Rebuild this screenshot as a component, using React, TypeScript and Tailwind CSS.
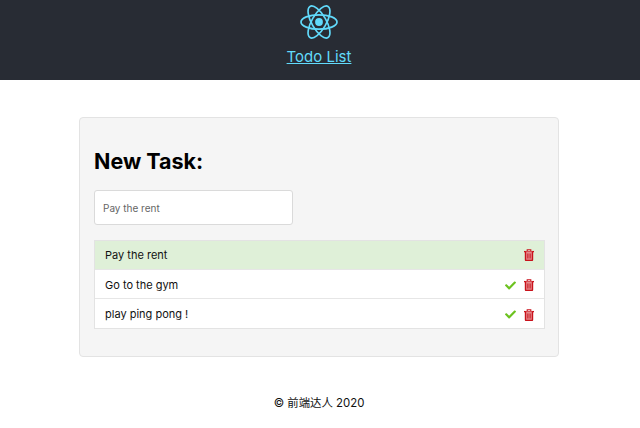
import { FaCheck } from "react-icons/fa";

const font = "font-['Inter','Noto_Sans_CJK_SC',sans-serif]";

function ReactLogo() {
    return (
        <svg viewBox="0 0 40 40" className="w-10 h-10 text-[#61dafb]" fill="none" stroke="currentColor" strokeWidth="1.7">
            <ellipse cx="20" cy="20" rx="18" ry="7.2" />
            <ellipse cx="20" cy="20" rx="18" ry="7.2" transform="rotate(60 20 20)" />
            <ellipse cx="20" cy="20" rx="18" ry="7.2" transform="rotate(120 20 20)" />
            <circle cx="20" cy="20" r="3.9" fill="currentColor" stroke="none" />
        </svg>
    );
}

function TrashIcon() {
    return (
        <svg viewBox="0 0 10 12" className="w-[10px] h-[12px] text-[#c9121b]" fill="none" stroke="currentColor">
            <path d="M0 2.6h10" strokeWidth="1.3" />
            <path d="M3.2 2V.7h3.6V2" strokeWidth="1.1" />
            <path d="M1.5 2.5v8.2c0 .5.3.8.8.8h5.4c.5 0 .8-.3.8-.8V2.5" strokeWidth="1.4" fill="#e58a8d" />
            <path d="M3.6 4.5v5M5 4.5v5M6.4 4.5v5" strokeWidth=".7" />
        </svg>
    );
}

interface TaskProps {
    text: string,
    done?: boolean
}

function Task({ text, done }: TaskProps) {
    return (
        <li className={`h-[29px] flex items-center pl-[10px] pr-[10px] text-[11px] text-[#111] border-b border-[#e6e6e6] last:border-b-0 ${done ? "bg-[#dff0d8]" : "bg-white pt-[2px]"}`}>
            <span className="flex-1">{text}</span>
            {!done && <FaCheck className="text-[#6cc21f] text-[11px] mr-[8px]" />}
            <TrashIcon />
        </li>
    );
}

export default function App() {
    return (
        <div className={`${font} w-[640px] h-[428px] bg-white overflow-hidden`}>
            <header className="h-20 bg-[#282c34] flex flex-col items-center pt-[2px] pr-[2px]">
                <ReactLogo />
                <a href="#" className="mt-[5px] text-[15px] leading-[20px] text-[#61dafb] underline">Todo List</a>
            </header>
            <main className="mt-[37px] ml-[79px] w-[480px] h-[240px] bg-[#f5f5f5] border border-[#e3e3e3] rounded-[4px] pl-[14px] pr-[13px]">
                <h2 className="mt-[28px] text-[21.5px] leading-[30px] font-bold text-black">New Task:</h2>
                <input
                    readOnly
                    placeholder="Pay the rent"
                    className="mt-[14px] block w-[199px] h-[35px] px-[8px] bg-white border border-[#dadada] rounded-[3px] text-[10px] placeholder:text-[#666] outline-none"
                />
                <ul className="mt-[15px] border border-[#e3e3e3]">
                    <Task text="Pay the rent" done />
                    <Task text="Go to the gym" />
                    <Task text="play ping pong !" />
                </ul>
            </main>
            <footer className="mt-[38px] pr-[2px] text-center text-[11.4px] leading-[16px] text-[#111]">© 前端达人 2020</footer>
        </div>
    );
}
